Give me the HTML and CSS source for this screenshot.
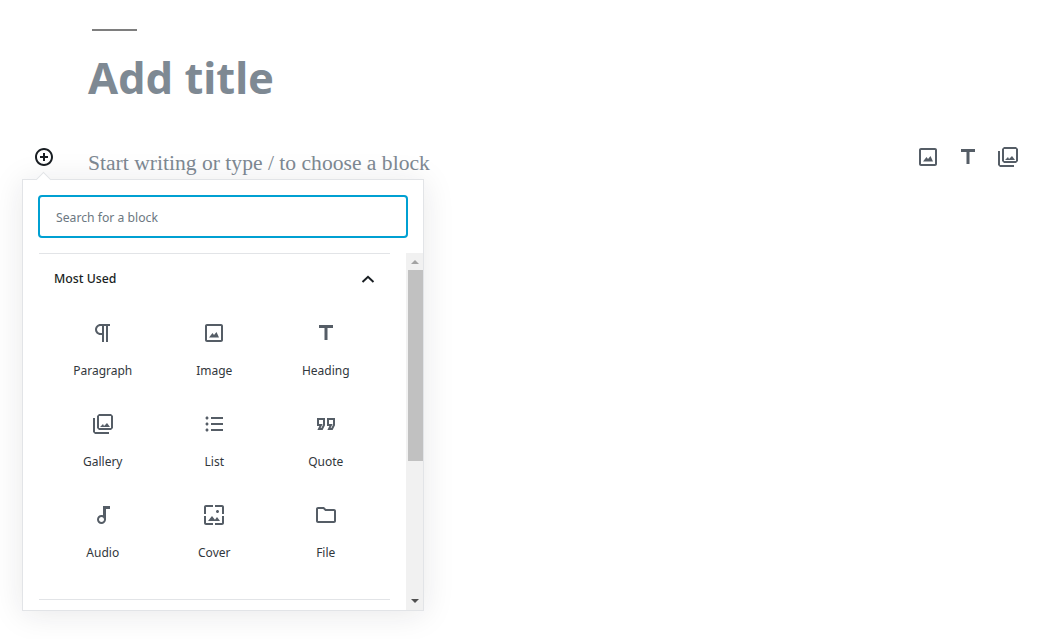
FILE: index.html
```html
<!DOCTYPE html>
<html lang="en">
<head>
<meta charset="utf-8">
<title>Add title</title>
<link rel="stylesheet" href="styles.css">
</head>
<body>
<svg class="defs" width="0" height="0" aria-hidden="true">
  <symbol id="i-image" viewBox="0 0 24 24"><path d="M19 5v14H5V5h14m0-2H5c-1.1 0-2 .9-2 2v14c0 1.1.9 2 2 2h14c1.1 0 2-.9 2-2V5c0-1.1-.9-2-2-2zM14.5 11l-2.5 3-1.5-2L7 16.5h10z"/></symbol>
  <symbol id="i-heading" viewBox="0 0 24 24"><path d="M5 4v3h5.5v12h3V7H19V4z"/></symbol>
  <symbol id="i-gallery" viewBox="0 0 24 24"><path d="M20 4v12H8V4h12m0-2H8L6 4v12l2 2h12l2-2V4l-2-2zM12 12l1 2 3-3 3 4H9zM2 6v14l2 2h14v-2H4V6H2z"/></symbol>
  <symbol id="i-para" viewBox="0 0 24 24"><path d="M11 5v7H9.5C7.6 12 6 10.4 6 8.5S7.6 5 9.5 5H11m8-2H9.5C6.5 3 4 5.5 4 8.5S6.5 14 9.5 14H11v7h2V5h2v16h2V5h2V3z"/></symbol>
  <symbol id="i-list" viewBox="0 0 24 24"><path d="M9 19h12v-2H9v2zm0-6h12v-2H9v2zm0-8v2h12V5H9zm-4-.5c-.828 0-1.5.672-1.5 1.5S4.172 7.5 5 7.5 6.5 6.828 6.5 6 5.828 4.5 5 4.5zm0 6c-.828 0-1.5.672-1.5 1.5s.672 1.5 1.5 1.5 1.5-.672 1.5-1.5-.672-1.5-1.5-1.5zm0 6c-.828 0-1.5.672-1.5 1.5s.672 1.5 1.5 1.5 1.5-.672 1.5-1.5-.672-1.5-1.5-1.5z"/></symbol>
  <symbol id="i-quote" viewBox="0 0 24 24"><path d="M18.62 18h-5.24l2-4H13V6h8v7.24L18.62 18zm-2-2h.76L19 12.76V8h-4v4h3.62l-2 4zm-8 2H3.38l2-4H3V6h8v7.24L8.62 18zm-2-2h.76L9 12.76V8H5v4h3.62l-2 4z"/></symbol>
  <symbol id="i-audio" viewBox="0 0 24 24"><path d="M12 3v9.28c-.47-.17-.97-.28-1.5-.28C8.01 12 6 14.01 6 16.5S8.01 21 10.5 21c2.31 0 4.2-1.75 4.45-4H15V6h4V3h-7zm-1.5 16C9.12 19 8 17.88 8 16.5s1.12-2.5 2.5-2.5 2.5 1.12 2.5 2.5-1.12 2.5-2.5 2.5z"/></symbol>
  <symbol id="i-cover" viewBox="0 0 24 24"><path d="M4 4h7V2H4c-1.1 0-2 .9-2 2v7h2V4zm6 9l-4 5h12l-3-4-2.03 2.71L10 13zm7-4.5c0-.83-.67-1.5-1.5-1.5S14 7.67 14 8.5s.67 1.5 1.5 1.5S17 9.33 17 8.5zM20 2h-7v2h7v7h2V4c0-1.1-.9-2-2-2zm0 18h-7v2h7c1.1 0 2-.9 2-2v-7h-2v7zM4 13H2v7c0 1.1.9 2 2 2h7v-2H4v-7z"/></symbol>
  <symbol id="i-file" viewBox="0 0 24 24"><path d="M9.17 6l2 2H20v10H4V6h5.17M10 4H4c-1.1 0-1.99.9-1.99 2L2 18c0 1.1.9 2 2 2h16c1.1 0 2-.9 2-2V8c0-1.1-.9-2-2-2h-8l-2-2z"/></symbol>
</svg>

<main class="editor">
  <div class="rule"></div>
  <h1 class="title">Add title</h1>
  <div class="block-row">
    <button class="inserter" type="button" aria-label="Add block">
      <svg viewBox="0 0 20 20" width="20" height="20"><path d="M10 1c-5 0-9 4-9 9s4 9 9 9 9-4 9-9-4-9-9-9zm0 16c-3.9 0-7-3.1-7-7s3.1-7 7-7 7 3.1 7 7-3.1 7-7 7zm1-11H9v3H6v2h3v3h2v-3h3V9h-3V6z"/></svg>
    </button>
    <p class="placeholder">Start writing or type / to choose a block</p>
    <div class="quick">
      <svg class="icon"><use href="#i-image"/></svg>
      <svg class="icon"><use href="#i-heading"/></svg>
      <svg class="icon"><use href="#i-gallery"/></svg>
    </div>
  </div>
</main>

<section class="popover">
  <div class="arrow"></div>
  <div class="search"><span class="search-text">Search for a block</span></div>
  <div class="results">
    <div class="list">
      <div class="panel">
        <div class="panel-head">
          <span>Most Used</span>
          <svg class="chev" viewBox="0 0 14 8" width="14" height="8"><path d="M1.5 7 7 1.8 12.5 7" fill="none" stroke="#191e23" stroke-width="2"/></svg>
        </div>
        <div class="grid">
          <div class="item"><svg class="icon"><use href="#i-para"/></svg><span>Paragraph</span></div>
          <div class="item"><svg class="icon"><use href="#i-image"/></svg><span>Image</span></div>
          <div class="item"><svg class="icon"><use href="#i-heading"/></svg><span>Heading</span></div>
          <div class="item"><svg class="icon"><use href="#i-gallery"/></svg><span>Gallery</span></div>
          <div class="item"><svg class="icon"><use href="#i-list"/></svg><span>List</span></div>
          <div class="item"><svg class="icon"><use href="#i-quote"/></svg><span>Quote</span></div>
          <div class="item"><svg class="icon"><use href="#i-audio"/></svg><span>Audio</span></div>
          <div class="item"><svg class="icon"><use href="#i-cover"/></svg><span>Cover</span></div>
          <div class="item"><svg class="icon"><use href="#i-file"/></svg><span>File</span></div>
        </div>
      </div>
      <div class="panel-end"></div>
    </div>
    <div class="scrollbar">
      <div class="tri up"></div>
      <div class="track"><div class="thumb"></div></div>
      <div class="tri down"></div>
    </div>
  </div>
</section>
</body>
</html>
```
FILE: styles.css
```css
* { box-sizing: border-box; }
html, body { margin: 0; height: 100%; overflow: hidden; background: #fff; }
body { font-family: "Noto Sans", sans-serif; color: #32373c; position: relative; }
.defs { position: absolute; }
.icon { width: 24px; height: 24px; fill: #555d66; display: block; }

.editor { padding: 29px 27px 0 0; }
.rule { width: 45px; height: 2px; background: #7e7e7e; margin-left: 92px; }
.title { margin: 16px 0 0 88px; font-size: 43.5px; line-height: 60px; font-weight: 700; color: #7e8993; }
.block-row { display: flex; align-items: flex-start; margin-top: 39px; }
.inserter { width: 20px; height: 20px; padding: 0; border: 0; background: none; margin: 1px 0 0 34px; }
.inserter svg { display: block; fill: #191e23; }
.placeholder { margin: 0 0 0 34px; flex: 1; font-family: "Liberation Serif", serif; font-size: 21.6px; line-height: 34px; color: #7e8993; }
.quick { display: flex; gap: 16px; margin-top: -1px; }

.popover { position: absolute; left: 22px; top: 179px; width: 402px; height: 432px; background: #fff; border: 1px solid #e2e4e7; box-shadow: 0 3px 30px rgba(25,30,35,.1); padding: 15px 0 0 15px; }
.arrow { position: absolute; left: 15px; top: -6px; width: 11px; height: 11px; background: #fff; border-left: 1px solid #e2e4e7; border-top: 1px solid #e2e4e7; transform: rotate(45deg); }
.search { width: 370px; height: 43px; border: 2px solid #00a0d2; border-radius: 4px; padding: 2px 0 0 16px; display: flex; align-items: center; font-size: 12.2px; color: #6c7781; position: relative; background: #fff; }
.results { display: flex; margin-top: 15px; height: 357px; }
.list { width: 351px; margin-left: 1px; border-top: 1px solid #e2e4e7; display: flex; flex-direction: column; }
.panel { flex: 1; }
.panel-head { display: flex; justify-content: space-between; align-items: center; height: 49px; padding: 0 15px; font-size: 12.3px; font-weight: 500; color: #191e23; }
.grid { display: grid; grid-template-columns: repeat(3, 111.5px); grid-auto-rows: 91px; padding: 0 0 0 8px; }
.item { display: flex; flex-direction: column; align-items: center; padding-top: 18px; font-size: 12px; line-height: 16px; color: #32373c; }
.item span { margin-top: 18px; }
.panel-end { border-top: 1px solid #e2e4e7; height: 11px; }
.scrollbar { width: 17px; margin-left: 16px; background: #f1f1f1; display: flex; flex-direction: column; }
.track { flex: 1; padding-left: 2px; }
.thumb { height: 191px; background: #c1c1c1; }
.tri { height: 17px; display: flex; align-items: center; justify-content: center; }
.tri::before { content: ""; border-left: 4px solid transparent; border-right: 4px solid transparent; }
.up::before { border-bottom: 4px solid #a3a3a3; }
.down { padding-bottom: 2px; }
.down::before { border-top: 4px solid #505050; }
```
